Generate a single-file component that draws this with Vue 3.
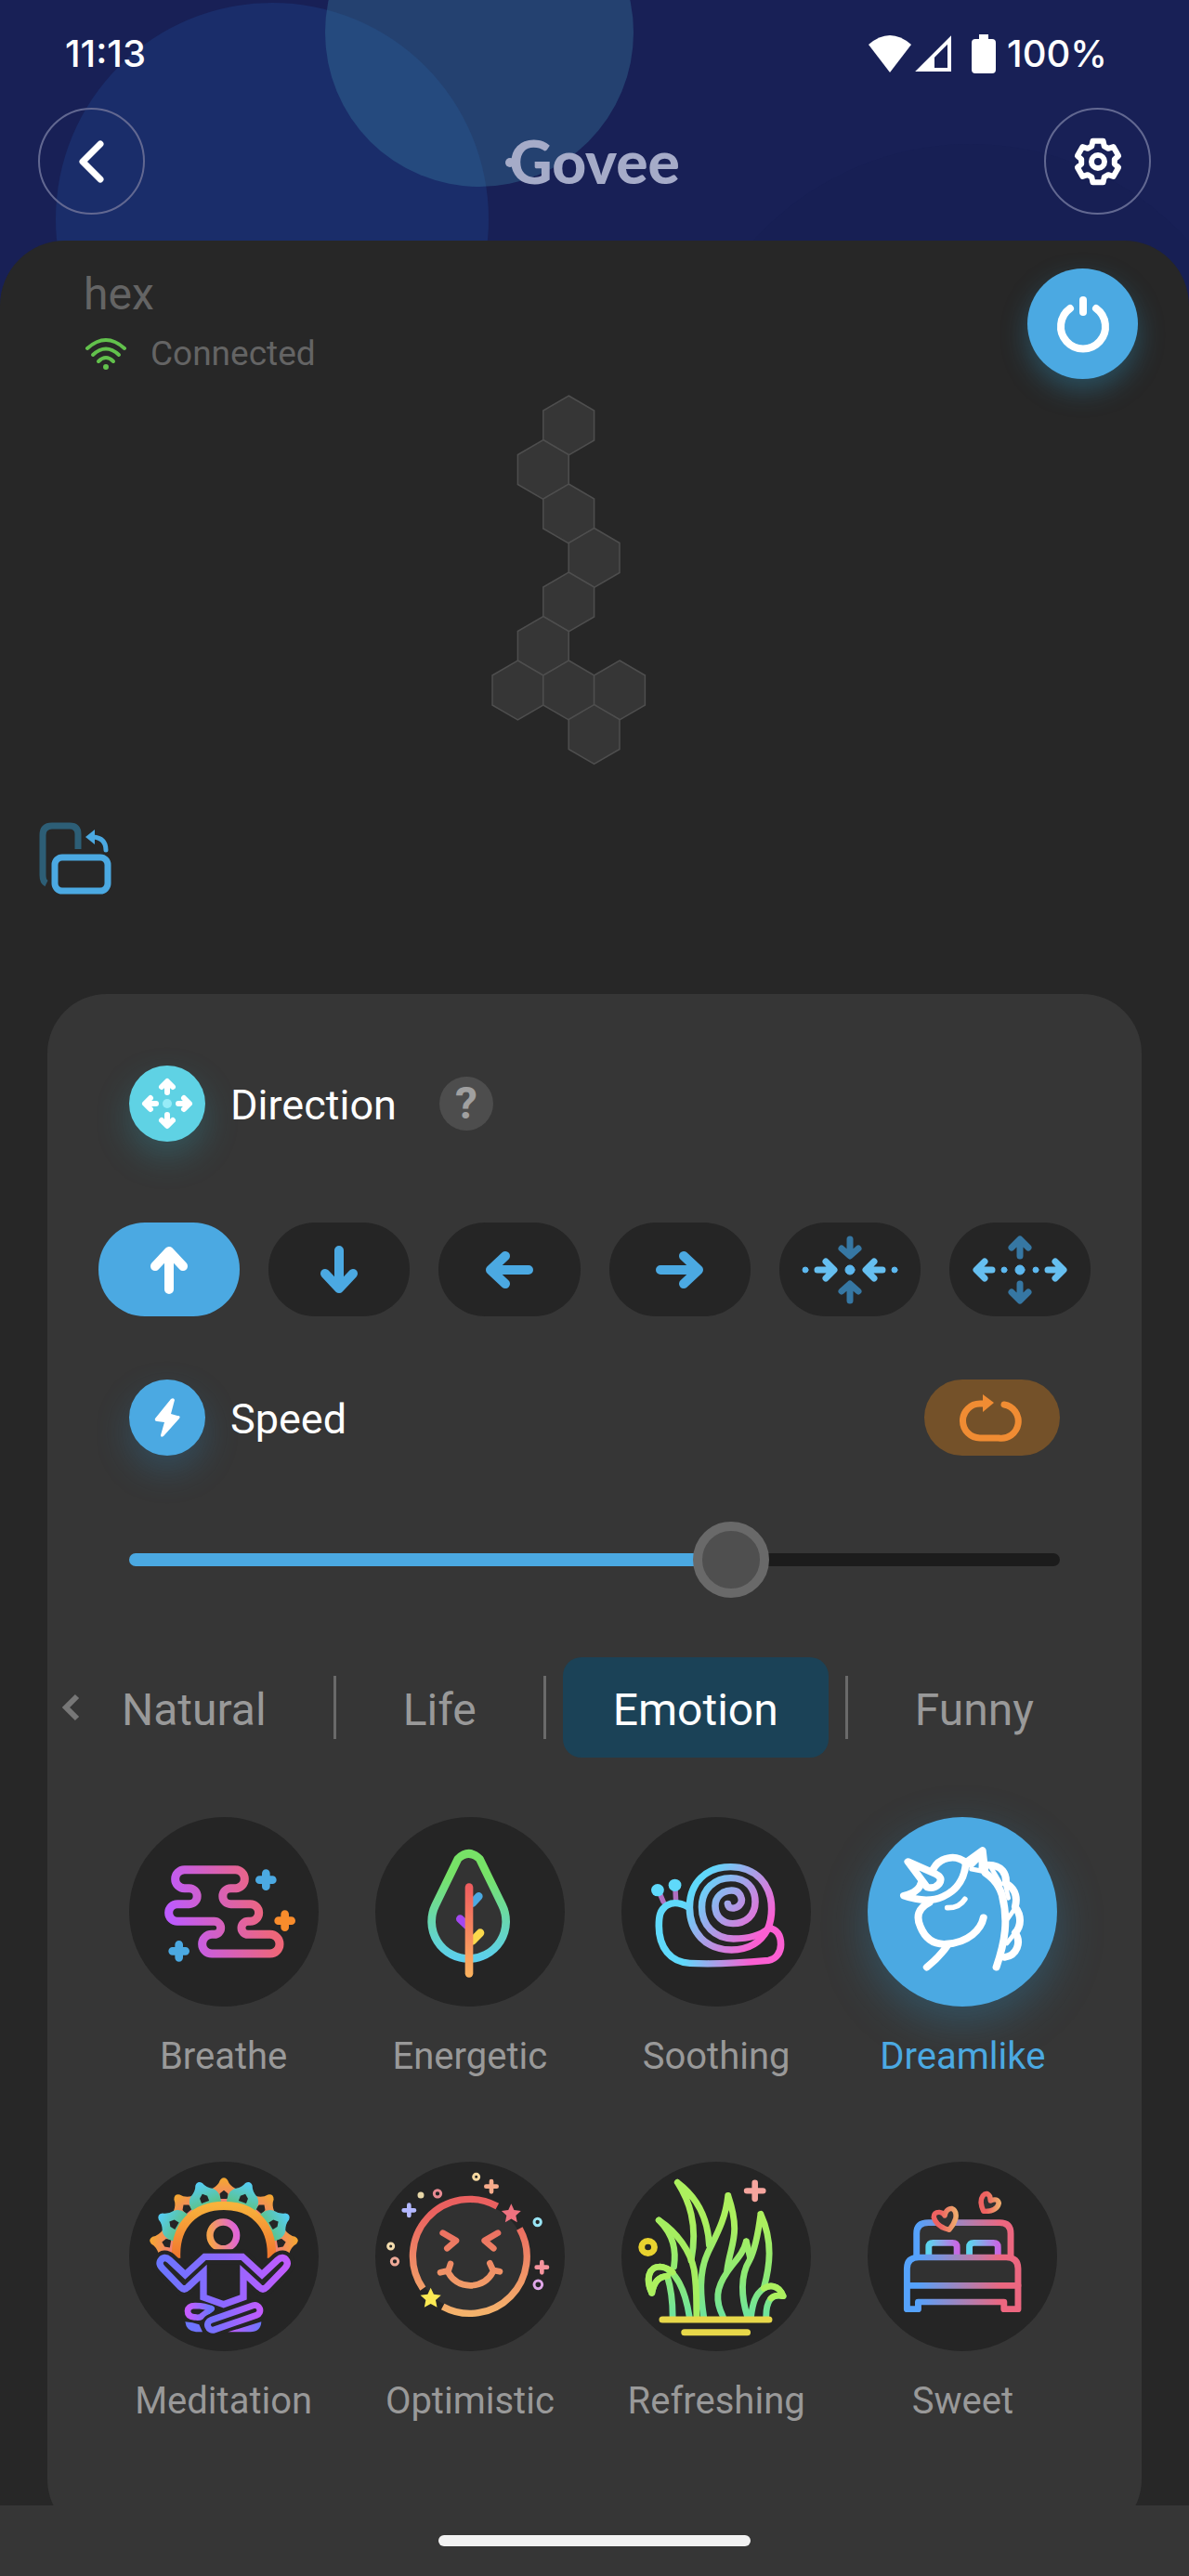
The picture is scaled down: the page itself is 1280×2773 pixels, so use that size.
<script setup>
import { ref, computed } from 'vue'

const speed = ref(66)
const direction = ref('up')
const activeTab = ref('Emotion')
const activeEffect = ref('Dreamlike')

const directions = [
  { id: 'up', angle: 0 },
  { id: 'down', angle: 180 },
  { id: 'left', angle: 270 },
  { id: 'right', angle: 90 },
  { id: 'gather', angle: null },
  { id: 'spread', angle: null },
]

const tabs = ['Natural', 'Life', 'Emotion', 'Funny']

const effects = [
  { name: 'Breathe', box: '59 78 612 612' },
  { name: 'Energetic', box: '854 78 612 612' },
  { name: 'Soothing', box: '86 78 592 612' },
  { name: 'Dreamlike', box: '855 78 592 612' },
  { name: 'Meditation', box: '59 80 612 612' },
  { name: 'Optimistic', box: '854 80 612 612' },
  { name: 'Refreshing', box: '85 81 592 612' },
  { name: 'Sweet', box: '850 80 592 612' },
]

// column and row of every light panel on the wall
const panels = [
  [3, 0], [2, 1], [3, 2], [4, 3], [3, 4],
  [2, 5], [1, 6], [3, 6], [5, 6], [4, 7],
]

const hexPoints = ([col, row]) => {
  const x = 2 + col * 27.4
  const y = 33 + row * 47.5
  return [[0, -32], [27.4, -16], [27.4, 16], [0, 32], [-27.4, 16], [-27.4, -16]]
    .map(([dx, dy]) => `${x + dx},${y + dy}`)
    .join(' ')
}

const petals = [-80, -40, 0, 40, 80, -60, -20, 20, 60]

const starPoints = (cx, cy, r) => {
  const points = []
  for (let i = 0; i < 10; i++) {
    const radius = i % 2 ? r * 0.48 : r
    const a = (i * 36 - 90) * Math.PI / 180
    points.push(`${cx + radius * Math.cos(a)},${cy + radius * Math.sin(a)}`)
  }
  return points.join(' ')
}

const gearPoints = computed(() => {
  const points = []
  for (let i = 0; i < 6; i++) {
    for (const [offset, r] of [[-22, 18], [-14, 23], [14, 23], [22, 18]]) {
      const a = (i * 60 - 90 + offset) * Math.PI / 180
      points.push(`${30 + r * Math.cos(a)},${30 + r * Math.sin(a)}`)
    }
  }
  return points.join(' ')
})
</script>

<template>
  <div class="page">
    <header class="top">
      <div class="blob blob-left"></div>
      <div class="blob blob-mid"></div>
      <div class="blob blob-right"></div>
      <div class="status-bar">
        <span>11:13</span>
        <div class="status-icons">
          <svg width="48" height="42" viewBox="0 0 48 42"><path d="M24 41L1 11Q24 -9 47 11Z" fill="#fff" /></svg>
          <svg width="42" height="42" viewBox="0 0 42 42"><path d="M38 6V38H6Z" fill="none" stroke="#fff" stroke-width="4" /><path d="M4 40L22 22V36H38V40Z" fill="#fff" /></svg>
          <svg class="battery" width="26" height="42" viewBox="0 0 26 42"><path d="M8 0H18V5H22Q26 5 26 9V38Q26 42 22 42H4Q0 42 0 38V9Q0 5 4 5H8Z" fill="#fff" /></svg>
          <span>100%</span>
        </div>
      </div>
      <nav class="nav-bar">
        <button class="round-btn" aria-label="Back">
          <svg width="60" height="60" viewBox="0 0 60 60"><path d="M39 11L20 30L39 49" fill="none" stroke="#fff" stroke-width="7" stroke-linecap="round" stroke-linejoin="round" /></svg>
        </button>
        <div class="logo"><i class="logo-dot"></i>Govee</div>
        <button class="round-btn" aria-label="Settings">
          <svg width="60" height="60" viewBox="0 0 60 60" fill="none" stroke="#fff" stroke-width="6" stroke-linejoin="round">
            <polygon :points="gearPoints" />
            <circle cx="30" cy="30" r="7" />
          </svg>
        </button>
      </nav>
    </header>

    <main class="sheet">
      <section class="device">
        <div>
          <h1>hex</h1>
          <p class="connection">
            <svg width="48" height="36" viewBox="0 0 48 36" fill="none" stroke="#62c14c" stroke-width="4" stroke-linecap="round">
              <path d="M4 12Q24 -6 44 12" />
              <path d="M10 19Q24 6 38 19" />
              <path d="M16 26Q24 18 32 26" />
              <circle cx="24" cy="32" r="2" fill="#62c14c" stroke-width="2" />
            </svg>
            Connected
          </p>
        </div>
        <button class="power" aria-label="Power">
          <svg width="68" height="68" viewBox="0 0 68 68" fill="none" stroke="#fff" stroke-width="8" stroke-linecap="round">
            <path d="M20 17A24 24 0 1 0 48 17" />
            <path d="M34 8V21" />
          </svg>
        </button>
      </section>

      <div class="stage">
        <svg width="224" height="400" viewBox="0 0 224 400">
          <polygon v-for="(panel, i) in panels" :key="i" :points="hexPoints(panel)" fill="#363636" stroke="#4e4e4e" stroke-width="1.5" />
        </svg>
      </div>

      <button class="rotate" aria-label="Rotate layout">
        <svg width="78" height="78" viewBox="0 0 78 78" fill="none" stroke-width="7" stroke-linecap="round">
          <path d="M8 66Q4 64 4 57V14Q4 4 14 4H33Q42 4 42 13V29" stroke="#2d5e76" stroke-linecap="butt" />
          <rect x="17" y="38" width="57" height="36" rx="8" stroke="#4ba9e2" />
          <path d="M58 16Q72 17 72 30" stroke="#4ba9e2" stroke-width="5" />
          <path d="M50 16L60 8V24Z" fill="#4ba9e2" />
        </svg>
      </button>

      <section class="card">
        <div class="row">
          <span class="badge badge-cyan">
            <svg width="62" height="62" viewBox="-31 -31 62 62">
              <circle r="5" fill="#97ecf8" />
              <path v-for="a in [0, 90, 180, 270]" :key="a" :transform="`rotate(${a})`" d="M0 -12V-23M-6 -18L0 -24L6 -18" fill="none" stroke="#fff" stroke-width="6" stroke-linecap="round" stroke-linejoin="round" />
            </svg>
          </span>
          <h2>Direction</h2>
          <button class="help" aria-label="About direction">?</button>
        </div>

        <div class="directions">
          <button
            v-for="item in directions"
            :key="item.id"
            class="direction"
            :class="{ active: item.id === direction }"
            :aria-label="item.id"
            @click="direction = item.id"
          >
            <svg v-if="item.angle !== null" width="52" height="52" viewBox="-26 -26 52 52">
              <path :transform="`rotate(${item.angle})`" d="M0 21V-18M-15 -4L0 -20L15 -4" />
            </svg>
            <svg v-else-if="item.id === 'gather'" class="multi" width="110" height="80" viewBox="-55 -40 110 80">
              <path class="dim" d="M0 -33V-16M-9 -23L0 -15L9 -23M0 33V16M-9 23L0 15L9 23" />
              <path class="bright" d="M-35 0H-18M-26 -9L-17 0L-26 9M35 0H18M26 -9L17 0L26 9" />
              <circle r="5" /><circle cx="-48" r="3" /><circle cx="48" r="3" />
            </svg>
            <svg v-else class="multi" width="110" height="80" viewBox="-55 -40 110 80">
              <path class="dim" d="M0 -15V-31M-9 -24L0 -33L9 -24M0 15V31M-9 24L0 33L9 24" />
              <path class="bright" d="M-30 0H-46M-38 -9L-47 0L-38 9M30 0H46M38 -9L47 0L38 9" />
              <circle r="5" /><circle cx="-17" r="3" /><circle cx="17" r="3" />
            </svg>
          </button>
        </div>

        <div class="row speed-row">
          <span class="badge badge-blue">
            <svg width="44" height="48" viewBox="0 0 44 48"><path d="M26 4L9 25Q8 28 11 28L19 29L15 43Q15 46 18 44L35 25Q37 22 33 22L26 20L30 5Q29 2 26 4Z" fill="#fff" /></svg>
          </span>
          <h2><label for="speed">Speed</label></h2>
          <button class="loop" aria-label="Loop">
            <svg width="72" height="54" viewBox="0 0 72 54" fill="none" stroke="#f08c33" stroke-width="7" stroke-linecap="round">
              <path d="M28 12H23A18 18 0 0 0 23 49H43A18 18 0 0 0 49 13" />
              <path d="M26 2L38 11L26 21Z" fill="#f08c33" stroke="none" />
            </svg>
          </button>
        </div>

        <input id="speed" v-model.number="speed" class="slider" type="range" min="0" max="100" :style="{ '--value': speed + '%' }" />

        <div class="tabs">
          <button class="tabs-prev" aria-label="Previous">
            <svg width="24" height="32" viewBox="0 0 24 32"><path d="M18 4L6 16L18 28" fill="none" stroke="#777" stroke-width="6" /></svg>
          </button>
          <template v-for="(tab, i) in tabs" :key="tab">
            <span v-if="i > 0" class="divider"></span>
            <button class="tab" :class="{ active: tab === activeTab }" @click="activeTab = tab">{{ tab }}</button>
          </template>
        </div>

        <div class="effects">
          <button
            v-for="effect in effects"
            :key="effect.name"
            class="effect"
            :class="{ active: effect.name === activeEffect }"
            @click="activeEffect = effect.name"
          >
            <span class="disc">
              <svg :viewBox="effect.box" width="204" height="204" preserveAspectRatio="none" fill="none" stroke-linecap="round" stroke-linejoin="round">
                <g v-if="effect.name === 'Breathe'">
                  <linearGradient id="breathe" x1="190" y1="400" x2="500" y2="330" gradientUnits="userSpaceOnUse">
                    <stop offset="0" stop-color="#bd5bff" /><stop offset="1" stop-color="#ef6679" />
                  </linearGradient>
                  <path d="M238 248H402A30 30 0 0 1 402 308H387A25 25 0 0 0 387 359H450A28 28 0 0 1 450 415H443A21 21 0 0 0 443 457H514A31 31 0 0 1 514 519H326A31 31 0 0 1 326 457H334A21 21 0 0 0 334 415H215A28 28 0 0 1 215 359H253A25 25 0 0 0 253 308H238A30 30 0 0 1 238 248Z" stroke="url(#breathe)" stroke-width="27" />
                  <path d="M501 260V302M480 281H522M220 490V532M199 511H241" stroke="#4ba9e2" stroke-width="26" />
                  <path d="M562 392V434M541 413H583" stroke="#f98c2c" stroke-width="26" />
                </g>

                <g v-else-if="effect.name === 'Energetic'">
                  <linearGradient id="leaf" x1="0" y1="0" x2="0" y2="1">
                    <stop offset="0.2" stop-color="#77e267" /><stop offset="1" stop-color="#5ccfec" />
                  </linearGradient>
                  <linearGradient id="trunk" x1="0" y1="300" x2="0" y2="590" gradientUnits="userSpaceOnUse">
                    <stop offset="0" stop-color="#ef5d5f" /><stop offset="1" stop-color="#fbb15e" />
                  </linearGradient>
                  <path d="M1121 213Q1156 179 1191 213L1264 363A120 120 0 1 1 1048 363Z" fill="#333" stroke="url(#leaf)" stroke-width="26" />
                  <path d="M1188 334L1168 356" stroke="#4ba9e2" stroke-width="26" />
                  <path d="M1128 407L1150 428" stroke="#a347f0" stroke-width="26" />
                  <path d="M1193 452L1168 478" stroke="#fbd94c" stroke-width="26" />
                  <rect x="1144" y="292" width="26" height="304" rx="13" fill="url(#trunk)" />
                </g>

                <g v-else-if="effect.name === 'Soothing'" stroke-width="22">
                  <linearGradient id="snail" x1="290" y1="300" x2="520" y2="460" gradientUnits="userSpaceOnUse">
                    <stop offset="0.1" stop-color="#5fd9fb" /><stop offset="1" stop-color="#fb5fd2" />
                  </linearGradient>
                  <linearGradient id="snail-body" x1="200" y1="0" x2="590" y2="0" gradientUnits="userSpaceOnUse">
                    <stop offset="0.2" stop-color="#5fd9fb" /><stop offset="0.75" stop-color="#fb5fd2" />
                  </linearGradient>
                  <path d="M204 320L217 352M254 305L256 346" stroke="#b06fc0" stroke-width="16" />
                  <path d="M294 368C270 355 250 351 230 362C205 378 203 400 203 430C203 500 240 548 300 550C390 555 470 548 545 541C570 537 584 515 584 490C584 460 572 440 547 437" stroke="url(#snail-body)" />
                  <path d="M299 370C299 290 350 239 427 239C505 239 555 295 555 375C555 400 552 418 543 440C520 485 480 507 430 507C350 507 299 450 299 370Z" stroke="url(#snail)" />
                  <path d="M418 358Q420 374 438 372C456 368 465 352 460 338C456 322 444 315 430 315C402 315 379 335 379 365C379 398 402 422 434 422C474 422 504 396 504 352C504 305 474 275 428 275C376 275 337 312 337 368C337 428 378 471 436 471C480 471 520 462 547 437" stroke="url(#snail)" />
                  <circle cx="199" cy="314" r="20" fill="#5fd9fb" /><circle cx="253" cy="298" r="20" fill="#5fd9fb" />
                </g>

                <g v-else-if="effect.name === 'Dreamlike'" stroke="#fff" stroke-width="23">
                  <path d="M981 222L1068 262Q1092 274 1078 294Q1062 312 1040 304Z" />
                  <path d="M1022 292Q1014 322 968 332Q1040 358 1090 335Q1155 305 1162 228" />
                  <path d="M1060 246C1080 208 1130 196 1162 226" />
                  <path d="M1164 224L1214 186L1222 258Q1262 285 1275 330C1295 410 1285 480 1257 563" />
                  <path d="M1178 236L1208 205M1210 206V252L1180 246" stroke-width="16" />
                  <path d="M1232 233C1275 233 1290 262 1287 292C1322 312 1322 345 1316 368C1336 395 1336 430 1316 452C1336 482 1322 525 1283 531" />
                  <path d="M1240 240L1272 296M1285 295L1295 340M1316 372L1292 408M1316 452L1290 486" stroke-width="14" />
                  <path d="M1048 354C1012 372 1006 400 1020 432C1038 478 1068 490 1100 488C1170 485 1210 440 1217 403" />
                  <path d="M1104 371Q1142 372 1159 343" stroke-width="17" />
                  <path d="M1106 490Q1080 530 1040 563" />
                </g>

                <g v-else-if="effect.name === 'Meditation'">
                  <linearGradient id="petal-warm" x1="0" y1="0" x2="0" y2="1">
                    <stop offset="0" stop-color="#f5a82e" /><stop offset="0.7" stop-color="#f08074" />
                  </linearGradient>
                  <linearGradient id="petal-cool" x1="0" y1="0" x2="0" y2="1">
                    <stop offset="0" stop-color="#54cdf8" /><stop offset="0.8" stop-color="#5cc285" />
                  </linearGradient>
                  <linearGradient id="halo" x1="0" y1="0" x2="0" y2="1">
                    <stop offset="0" stop-color="#f8b23c" /><stop offset="1" stop-color="#f0752e" />
                  </linearGradient>
                  <linearGradient id="head" x1="0" y1="0.6" x2="1" y2="0.4">
                    <stop offset="0" stop-color="#f7a34a" /><stop offset="1" stop-color="#e065d8" />
                  </linearGradient>
                  <linearGradient id="body" x1="150" y1="0" x2="580" y2="0" gradientUnits="userSpaceOnUse">
                    <stop offset="0" stop-color="#6a76ff" /><stop offset="0.5" stop-color="#8d68ff" /><stop offset="1" stop-color="#c55bff" />
                  </linearGradient>
                  <linearGradient id="legs" x1="240" y1="0" x2="490" y2="0" gradientUnits="userSpaceOnUse">
                    <stop offset="0" stop-color="#6a76ff" /><stop offset="0.4" stop-color="#7a70ff" /><stop offset="1" stop-color="#c55bff" />
                  </linearGradient>
                  <linearGradient id="foot" x1="0" y1="0" x2="1" y2="0">
                    <stop offset="0" stop-color="#c55bff" /><stop offset="1" stop-color="#6a76ff" />
                  </linearGradient>
                  <g v-for="(angle, i) in petals" :key="angle" :transform="`rotate(${angle} 365 375)`">
                    <path d="M326 240Q302 192 326 168Q347 157 353 139Q365 125 377 139Q383 157 404 168Q428 192 404 240Z" :fill="i < 5 ? 'url(#petal-warm)' : 'url(#petal-cool)'" />
                    <path d="M365 172L378 183V200H352V183Z" fill="#252525" />
                  </g>
                  <path d="M211 392C205 280 275 222 365 222S525 280 519 392" fill="#252525" stroke="url(#halo)" stroke-width="28" stroke-linecap="butt" />
                  <circle cx="363" cy="318" r="43" stroke="url(#head)" stroke-width="22" />
                  <path d="M303 387H425L488 445L538 398Q556 382 568 400Q574 412 561 425L503 485Q491 497 479 485L428 438V518L364 541L299 518V438L249 485Q237 497 225 485L167 425Q154 412 160 400Q172 382 190 398L240 445Z" fill="#252525" stroke="#252525" stroke-width="48" />
                  <path d="M303 387H425L488 445L538 398Q556 382 568 400Q574 412 561 425L503 485Q491 497 479 485L428 438V518L364 541L299 518V438L249 485Q237 497 225 485L167 425Q154 412 160 400Q172 382 190 398L240 445Z" stroke="url(#body)" stroke-width="22" stroke-linejoin="miter" />
                  <path d="M325 555L292 580Q285 585 270 582Q248 580 248 562Q250 545 272 545Q305 546 325 555" stroke="url(#foot)" stroke-width="20" />
                  <path d="M240 597Q265 598 285 606L296 630H275Q244 628 240 597Z" fill="url(#legs)" />
                  <path d="M378 630L486 597Q484 630 450 630Z" fill="url(#foot)" />
                  <path d="M329 607L466 560" stroke="#252525" stroke-width="72" />
                  <path d="M329 607L465 560" stroke="url(#legs)" stroke-width="54" />
                  <path d="M329 607L465 560" stroke="#252525" stroke-width="12" />
                </g>

                <g v-else-if="effect.name === 'Optimistic'">
                  <linearGradient id="smile" x1="0" y1="200" x2="0" y2="580" gradientUnits="userSpaceOnUse">
                    <stop offset="0.1" stop-color="#ea605f" /><stop offset="1" stop-color="#f5b56c" />
                  </linearGradient>
                  <circle cx="1161" cy="387" r="176" fill="#313131" />
                  <g stroke="url(#smile)" stroke-width="20">
                    <path d="M1320 296A184 184 0 0 1 1072 548M1008 490A184 184 0 0 1 1248 224" stroke-width="22" stroke-linecap="butt" />
                    <path d="M1072 310L1115 335L1086 360M1250 310L1207 335L1236 360" />
                    <path d="M1064 438L1090 432L1097 410M1256 435L1234 430L1224 408M1090 438Q1112 478 1161 480Q1212 478 1234 436" />
                  </g>
                  <polygon :points="starPoints(1293, 249, 33)" fill="#ef7280" />
                  <polygon :points="starPoints(1033, 522, 35)" fill="#fcea53" />
                  <g stroke-width="14">
                    <path d="M963 220V254M946 237H980" stroke="#b3b8ff" />
                    <path d="M1229 143V177M1212 160H1246" stroke="#f7ab8b" />
                    <path d="M1392 404V438M1375 421H1409" stroke="#f4939c" />
                  </g>
                  <g stroke-width="9">
                    <circle cx="1180" cy="129" r="9" stroke="#f6d8a0" />
                    <circle cx="1055" cy="183" r="11" stroke="#e88a92" />
                    <circle cx="1001" cy="188" r="6" stroke="#e8d8a8" fill="#e8d8a8" />
                    <circle cx="904" cy="353" r="9" stroke="#f3dcae" />
                    <circle cx="917" cy="402" r="11" stroke="#eeaa98" />
                    <circle cx="1378" cy="275" r="11" stroke="#99e4f4" />
                    <circle cx="1380" cy="477" r="13" stroke="#dfa6e8" />
                  </g>
                </g>

                <g v-else-if="effect.name === 'Refreshing'">
                  <linearGradient id="grass" x1="0" y1="140" x2="0" y2="590" gradientUnits="userSpaceOnUse">
                    <stop offset="0.3" stop-color="#acf05e" /><stop offset="0.7" stop-color="#8ce976" /><stop offset="1" stop-color="#6be3a0" />
                  </linearGradient>
                  <g stroke="url(#grass)" stroke-width="20">
                    <path d="M260 148C295 205 325 280 303 400M260 148C320 195 355 260 359 350" />
                    <path d="M418 190C410 270 380 320 355 375C325 440 333 520 342 580M418 190C460 320 425 345 415 432" />
                    <path d="M475 338C465 380 440 400 415 438C380 490 378 530 402 580M475 338L487 390" />
                    <path d="M520 250C510 330 500 370 485 400C455 450 460 520 478 580M520 250C560 340 548 420 530 488" />
                    <path d="M202 270C250 320 256 370 249 420M180 505C160 460 170 420 205 420C255 425 285 500 297 580M180 505C188 465 203 453 228 450C240 490 245 530 245 580" />
                    <path d="M590 515C575 475 545 480 530 490C502 510 495 540 490 580M590 515C552 505 537 535 537 580" />
                  </g>
                  <path d="M202 270C260 310 300 370 312 430C322 500 318 540 320 580" stroke="#a5ee60" stroke-width="20" />
                  <path d="M180 505C160 460 170 420 205 420Q230 422 245 438M180 505C188 465 203 453 228 450M590 515C575 475 545 480 530 490M590 515Q565 509 552 522" stroke="#acf05e" stroke-width="20" />
                  <path d="M213 591H546M282 632H478" stroke="#e8d84a" stroke-width="21" />
                  <circle cx="168" cy="357" r="20" stroke="#e8d22f" stroke-width="20" />
                  <path d="M502 149V201M477 175H527" stroke="#f5a59e" stroke-width="19" />
                </g>

                <g v-else stroke-width="20">
                  <linearGradient id="bed" x1="970" y1="0" x2="1320" y2="0" gradientUnits="userSpaceOnUse">
                    <stop offset="0.1" stop-color="#55a2fb" /><stop offset="0.85" stop-color="#ec6780" />
                  </linearGradient>
                  <linearGradient id="pillow" x1="0" y1="0" x2="1" y2="0">
                    <stop offset="0" stop-color="#5cd4ee" /><stop offset="1" stop-color="#c868e4" />
                  </linearGradient>
                  <linearGradient id="heart" x1="0" y1="0" x2="1" y2="0">
                    <stop offset="0.3" stop-color="#ee6261" /><stop offset="1" stop-color="#eeaa6c" />
                  </linearGradient>
                  <path d="M1003 389V312Q1003 277 1040 277H1262Q1297 277 1297 312V389" fill="#313131" stroke="url(#bed)" />
                  <path d="M1041 382V356Q1041 342 1055 342H1115Q1129 342 1129 356V382" fill="#252525" stroke="url(#pillow)" />
                  <path d="M1168 382V356Q1168 342 1182 342H1243Q1257 342 1257 356V382" fill="#252525" stroke="url(#pillow)" />
                  <path d="M973 480V425Q973 389 1010 389H1283Q1320 389 1320 425V480Z" fill="#313131" stroke="url(#bed)" />
                  <path d="M973 480V556H1008V533H1276V556H1320V480" stroke="url(#bed)" />
                  <path d="M1105 300Q1065 290 1057 260Q1056 242 1075 243Q1086 244 1091 254Q1095 232 1112 231Q1130 238 1125 264Q1120 282 1105 300Z" fill="#313131" stroke="url(#heart)" stroke-width="16" />
                  <path d="M1212 240Q1198 207 1210 190Q1222 176 1232 192L1234 206Q1256 196 1260 214Q1254 242 1212 240Z" fill="#313131" stroke="url(#heart)" stroke-width="16" />
                </g>
              </svg>
            </span>
            <span class="effect-name">{{ effect.name }}</span>
          </button>
        </div>
      </section>
    </main>

    <footer class="home-bar"><span class="home-pill"></span></footer>
  </div>
</template>

<style>
body {
  margin: 0;
  background: #272727;
}
</style>

<style scoped>
.page {
  display: flex;
  flex-direction: column;
  min-height: 100vh;
  background: #272727;
  font-family: Roboto, sans-serif;
  overflow: hidden;
}

button {
  border: none;
  padding: 0;
  background: none;
  font: inherit;
  color: inherit;
  cursor: pointer;
}

svg {
  display: block;
}

h1,
h2,
p {
  margin: 0;
  font-weight: 400;
}

.top {
  position: relative;
  overflow: hidden;
  padding: 33px 0 98px;
  background: #182056;
}

.blob {
  position: absolute;
  border-radius: 50%;
}

.blob-left {
  left: 60px;
  top: 3px;
  width: 466px;
  height: 466px;
  background: #1a2d6a;
}

.blob-mid {
  left: 350px;
  top: -131px;
  width: 332px;
  height: 332px;
  background: rgba(62, 135, 168, 0.33);
}

.blob-right {
  right: -80px;
  top: 155px;
  width: 630px;
  height: 630px;
  background: #171f54;
}

.status-bar {
  position: relative;
  display: flex;
  justify-content: space-between;
  align-items: center;
  height: 50px;
  padding: 0 88px 0 70px;
  color: #fff;
  font: 500 40px/50px Inter, sans-serif;
}

.status-icons {
  display: flex;
  align-items: center;
  gap: 2px;
}

.battery {
  margin: 0 10px 0 18px;
}

.nav-bar {
  position: relative;
  display: flex;
  justify-content: space-between;
  align-items: center;
  margin-top: 33px;
  padding: 0 41px;
}

.round-btn {
  display: flex;
  align-items: center;
  justify-content: center;
  box-sizing: border-box;
  width: 115px;
  height: 115px;
  border: 2px solid #626891;
  border-radius: 50%;
}

.logo {
  position: relative;
  color: #a5abc8;
  font: 900 64px/64px Lato, sans-serif;
}

.logo-dot {
  position: absolute;
  left: -4px;
  top: 28px;
  width: 10px;
  height: 10px;
  border-radius: 50%;
  background: #a5abc8;
}

.sheet {
  position: relative;
  flex: 1;
  margin-top: -70px;
  padding-top: 30px;
  border-radius: 70px 70px 0 0;
  background: #272727;
}

.device {
  display: flex;
  justify-content: space-between;
  align-items: flex-start;
  padding: 0 55px 0 90px;
  color: #646464;
}

h1 {
  font-size: 48px;
  line-height: 56px;
}

.connection {
  display: flex;
  align-items: center;
  gap: 24px;
  margin-top: 12px;
  font-size: 37px;
  line-height: 48px;
}

.power {
  display: flex;
  align-items: center;
  justify-content: center;
  width: 119px;
  height: 119px;
  border-radius: 50%;
  background: #4ba9e2;
  box-shadow: 0 12px 28px rgba(45, 140, 180, 0.4);
}

.stage {
  display: flex;
  justify-content: center;
  padding-top: 17px;
}

.rotate {
  display: block;
  margin: 60px 0 0 42px;
}

/* the card runs on underneath the home bar */
.card {
  margin: 107px 51px -36px;
  padding: 77px 0 124px;
  border-radius: 64px;
  background: #363636;
}

.row {
  display: flex;
  align-items: center;
  padding: 0 88px;
}

.badge {
  display: flex;
  align-items: center;
  justify-content: center;
  width: 82px;
  height: 82px;
  border-radius: 50%;
}

.badge-cyan {
  background: #5fd2e4;
  box-shadow: 0 16px 36px rgba(50, 160, 180, 0.3);
}

.badge-blue {
  background: #4ba9e2;
  box-shadow: 0 16px 36px rgba(45, 130, 180, 0.3);
}

h2 {
  margin-left: 27px;
  padding-top: 4px;
  color: #fff;
  font-size: 45px;
  line-height: 56px;
}

.help {
  width: 58px;
  height: 58px;
  margin-left: 46px;
  border-radius: 50%;
  background: #4d4d4d;
  color: #a0a0a0;
  font-size: 48px;
  font-weight: 700;
  line-height: 58px;
}

.directions {
  display: flex;
  gap: 31px;
  margin-top: 87px;
  padding: 0 55px;
}

.direction {
  display: flex;
  flex: 1;
  align-items: center;
  justify-content: center;
  height: 101px;
  border-radius: 50px;
  background: #252525;
  fill: none;
  stroke: #4ba9e2;
  stroke-width: 10;
  stroke-linecap: round;
  stroke-linejoin: round;
}

.direction.active {
  background: #4ba9e2;
  stroke: #fff;
}

.multi {
  stroke-width: 7;
}

.multi circle {
  fill: #5db8ef;
  stroke: #5db8ef;
  stroke-width: 1;
}

.dim {
  stroke: #3677a3;
}

.bright {
  stroke: #66bff0;
}

.speed-row {
  margin-top: 68px;
}

.loop {
  display: flex;
  align-items: center;
  justify-content: center;
  width: 146px;
  height: 82px;
  margin-left: auto;
  border-radius: 41px;
  background: #745129;
}

.slider {
  -webkit-appearance: none;
  appearance: none;
  display: block;
  width: calc(100% - 176px);
  height: 82px;
  margin: 71px 88px 0;
  background: none;
}

.slider::-webkit-slider-runnable-track {
  height: 14px;
  border-radius: 7px;
  background: linear-gradient(to right, #4ba9e2 var(--value), #1c1c1c var(--value));
}

.slider::-webkit-slider-thumb {
  -webkit-appearance: none;
  box-sizing: border-box;
  width: 82px;
  height: 82px;
  margin-top: -34px;
  border: 10px solid #696969;
  border-radius: 50%;
  background: #4f4f4f;
}

.tabs {
  position: relative;
  display: flex;
  align-items: center;
  gap: 18px;
  margin-top: 64px;
  padding-left: 26px;
  color: #999;
}

.tabs-prev {
  position: absolute;
  left: 14px;
}

.tab {
  height: 108px;
  padding: 4px 54px 0;
  border-radius: 20px;
  font-size: 48px;
}

.tab.active {
  background: #1b4257;
  color: #fff;
}

.divider {
  width: 3px;
  height: 68px;
  background: #6a6a6a;
}

.effects {
  display: grid;
  grid-template-columns: repeat(4, 1fr);
  row-gap: 89px;
  margin-top: 64px;
  padding: 0 60px 0 57px;
}

.effect {
  display: flex;
  flex-direction: column;
  align-items: center;
  gap: 30px;
  color: #999;
  font-size: 40px;
  line-height: 48px;
}

.disc {
  border-radius: 50%;
  background: #252525;
}

.effect.active {
  color: #4ba9e2;
}

.effect.active .disc {
  background: #4ba9e2;
  box-shadow: 0 16px 48px rgba(45, 140, 190, 0.35);
}

.home-bar {
  position: relative;
  display: flex;
  align-items: center;
  justify-content: center;
  height: 76px;
  background: #363636;
}

.home-pill {
  width: 336px;
  height: 12px;
  border-radius: 6px;
  background: #f2f2f2;
}
</style>
